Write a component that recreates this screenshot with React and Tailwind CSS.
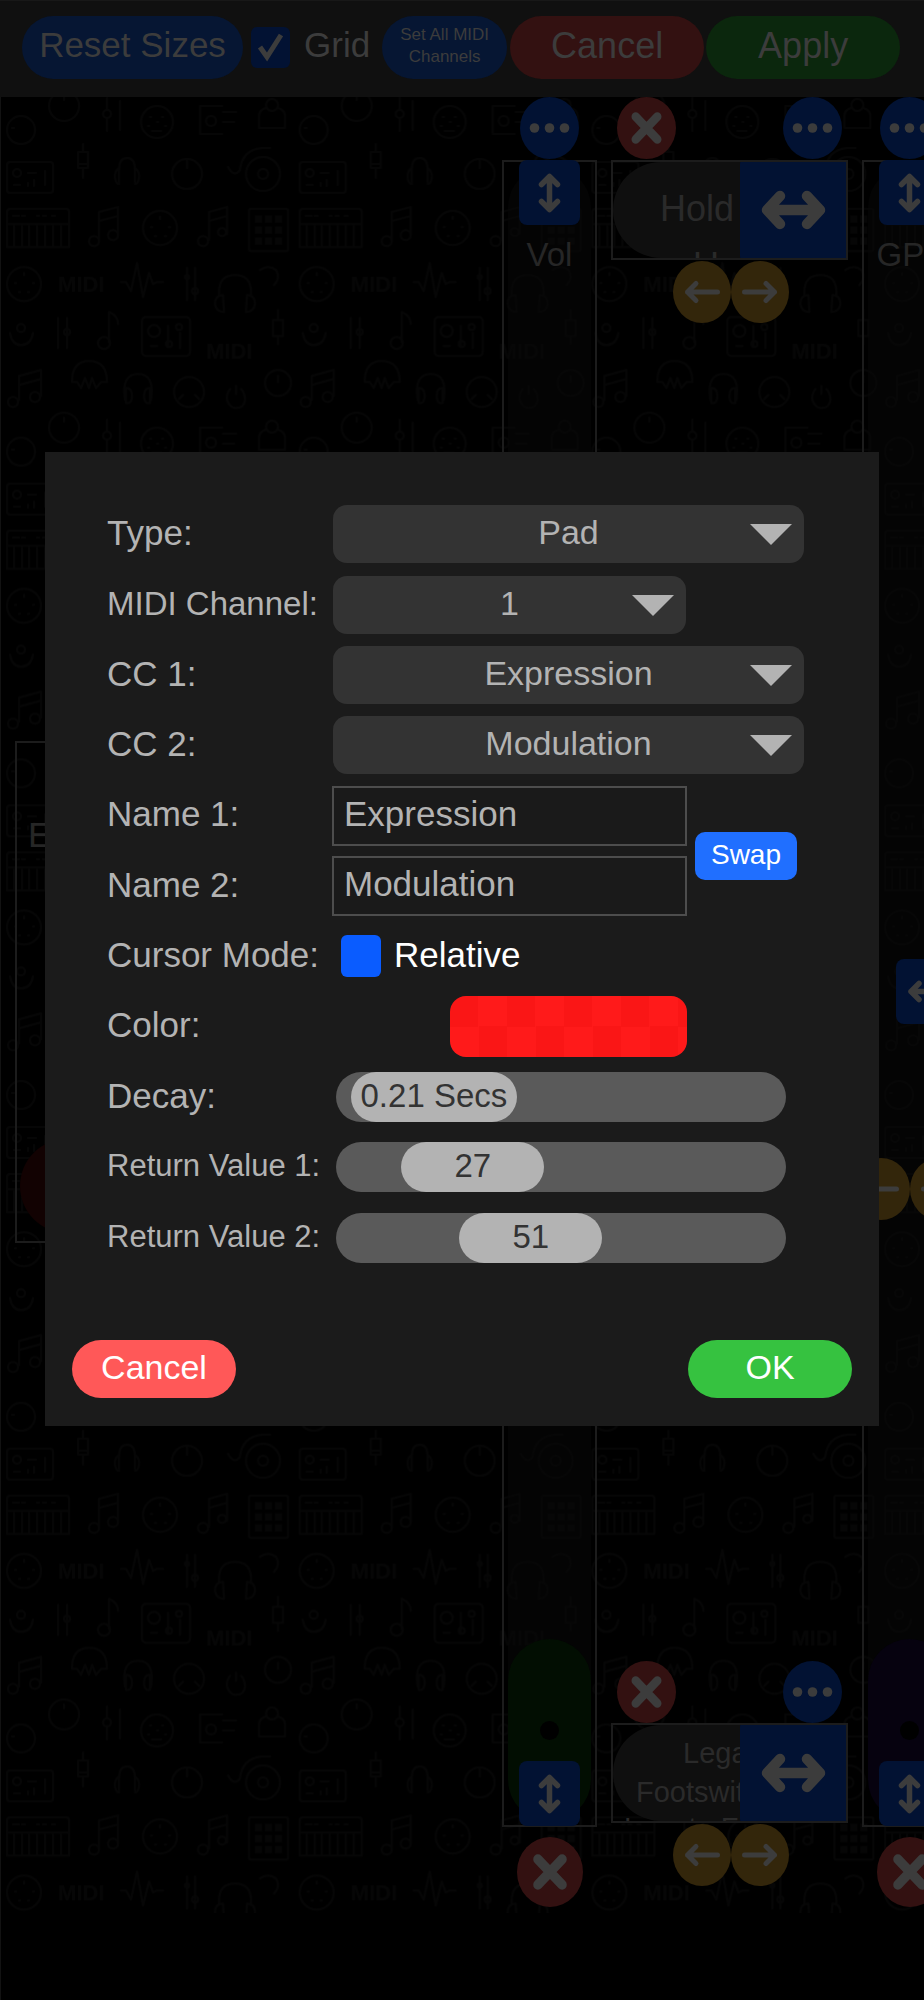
import { useState } from 'react';

/* ---------- Icons ---------- */

const CloseIcon = () => (
  <svg viewBox="0 0 60 60" preserveAspectRatio="none" className="w-full h-full" fill="none" stroke="currentColor" strokeWidth="8.5" strokeLinecap="round">
    <path d="M19 19L41 41M41 19L19 41" />
  </svg>
);

const DotsIcon = () => (
  <svg viewBox="0 0 59 62" className="w-full h-full" fill="currentColor">
    <circle cx="14.5" cy="31" r="4.8" />
    <circle cx="29.5" cy="31" r="4.8" />
    <circle cx="44.5" cy="31" r="4.8" />
  </svg>
);

const UpDownIcon = () => (
  <svg viewBox="0 0 61 65" className="w-full h-full" fill="none" stroke="currentColor" strokeWidth="5.5" strokeLinecap="round" strokeLinejoin="round">
    <path d="M30.5 17V49M22.5 24.5L30.5 16.5L38.5 24.5M22.5 41.5L30.5 49.5L38.5 41.5" />
  </svg>
);

const WideArrowIcon = () => (
  <svg viewBox="0 0 108 100" className="w-full h-full" fill="none" stroke="currentColor" strokeWidth="10.5" strokeLinecap="round" strokeLinejoin="round">
    <path d="M28 50H80M40 36L27 50L40 64M67 36L80 50L67 64" />
  </svg>
);

const SmallWideArrowIcon = () => (
  <svg viewBox="0 0 65 65" className="w-full h-full" fill="none" stroke="currentColor" strokeWidth="5.5" strokeLinecap="round" strokeLinejoin="round">
    <path d="M15 32.5H50M23 24.5L15 32.5L23 40.5M42 24.5L50 32.5L42 40.5" />
  </svg>
);

const ArrowLeftIcon = () => (
  <svg viewBox="0 0 58 62" className="w-full h-full" fill="none" stroke="currentColor" strokeWidth="5" strokeLinecap="round" strokeLinejoin="round">
    <path d="M14.5 31H44.5M23 22.5L14.5 31L23 39.5" />
  </svg>
);

const ArrowRightIcon = () => (
  <svg viewBox="0 0 58 62" className="w-full h-full" fill="none" stroke="currentColor" strokeWidth="5" strokeLinecap="round" strokeLinejoin="round">
    <path d="M13.5 31H43.5M35 22.5L43.5 31L35 39.5" />
  </svg>
);

/* ---------- Wallpaper ---------- */

const Wallpaper = () => (
  <svg className="absolute inset-0 w-full h-full" aria-hidden="true">
    <defs>
      <pattern id="doodles" x="0" y="-9" width="292.7" height="321.7" patternUnits="userSpaceOnUse">
        <g fill="none" stroke="#060606" strokeWidth="2" strokeLinecap="round" strokeLinejoin="round">
          {/* knobs, faders and face */}
          <circle cx="64" cy="18" r="15" />
          <path d="M64 8V12M107 10V22M107 31V43M120 13V42" />
          <circle cx="107" cy="26" r="4" />
          <circle cx="21" cy="42" r="14" />
          <path d="M12 40h2" />
          <circle cx="157" cy="34" r="16" />
          <path d="M150 29h1M162 29h1M157 34h1M148 38h1M165 38h1M152 43h9" />
          <path d="M222 18H200V46H222M223 24H236M223 34H234" />
          <circle cx="211" cy="33" r="5" />
          <path d="M266 20Q259 22 259 28V40H285V28Q285 22 278 20" />
          <circle cx="272" cy="17" r="6" />

          {/* drum machine, jack, headphones, turntable */}
          <rect x="7" y="74" width="46" height="31" rx="3" />
          <circle cx="17" cy="85" r="4" />
          <path d="M28 85h8M14 97h6M28 95v3M34 92v6M45 83V97" />
          <path d="M83 56V64M78 64h10V80h-10ZM78 76h10M83 80V90" />
          <path d="M119 94V82Q119 70 127 70Q135 70 135 82V94M119 80Q114 84 115 90Q116 96 119 96M135 80Q140 84 139 90Q138 96 135 96" />
          <circle cx="187" cy="86" r="15" />
          <path d="M187 72V80" />
          <circle cx="263" cy="86" r="17" />
          <circle cx="263" cy="86" r="5" />
          <path d="M228 79Q234 90 240 82Q242 62 262 60H270" />

          {/* keyboard, notes, DIN socket, pads */}
          <path d="M7 159V124Q7 121 10 121H66Q69 121 69 124V159ZM7 136H69M14 138V158M22 138V158M29 138V158M37 138V158M45 138V158M53 138V158M61 138V158M13 128h6M22 128h3M37 128h2M43 128h3M52 128h3" />
          <path d="M99 152V124L118 119V146M99 133L118 128" />
          <circle cx="94" cy="153" r="5" />
          <circle cx="113" cy="147" r="5" />
          <circle cx="160" cy="140" r="17" />
          <path d="M160 129v2M151 139h1M169 139h1M155 148h1M165 148h1" />
          <path d="M209 152V124L227 119V146M209 133L227 128" />
          <circle cx="203" cy="153" r="5" />
          <circle cx="222" cy="144" r="4" />
          <rect x="249" y="121" width="39" height="42" rx="2" />
          <path strokeWidth="7" strokeLinecap="butt" d="M255 131h7M265 131h7M275 131h7M255 142h7M265 142h7M275 142h7M255 153h7M265 153h7M275 153h7" />

          {/* DIN socket, wave, faders, headphones */}
          <circle cx="24" cy="196" r="17" />
          <path d="M24 185v2M15 195h1M33 195h1M19 204h1M28 204h1" />
          <path d="M121 194H126L131 203L137 175L143 209L149 185L153 196L157 194H163" />
          <path d="M187 180V212M195 180V212" />
          <circle cx="187" cy="189" r="2" />
          <circle cx="195" cy="203" r="3" />
          <path d="M219 208V204Q219 187 235 187Q251 187 251 204V208" />
          <path d="M223 207Q215 207 215 216Q216 224 224 224ZM247 207Q255 207 255 216Q254 224 246 224Z" />
          <path d="M260 182Q268 176 276 182Q281 190 274 197" />

          {/* face, faders, note, mixer, jack */}
          <circle cx="21" cy="240" r="4" />
          <path d="M10 245Q12 257 21 257Q31 257 33 245M58 230V260M67 230V260" />
          <circle cx="67" cy="244" r="3" />
          <path d="M109 254V224Q118 228 118 236" />
          <circle cx="104" cy="255" r="6" />
          <rect x="142" y="229" width="48" height="39" rx="4" />
          <circle cx="154" cy="243" r="6" />
          <path d="M168 238V258M180 245V260M151 258h6" />
          <circle cx="179" cy="239" r="3" />
          <circle cx="169" cy="256" r="3" />
          <path d="M278 222V232M273 232h10V248h-10ZM278 248V256" />

          {/* notes, sun, headphones, knobs */}
          <path d="M19 312V288L41 282V308M19 297L41 291" />
          <circle cx="13" cy="314" r="5" />
          <circle cx="35" cy="309" r="5" />
          <path d="M72 294Q72 273 89 273Q107 273 107 294H101L96 300L92 290L89 300L85 290L81 300L77 294Z" />
          <path d="M125 312Q121 286 138 286Q155 286 151 312" />
          <path d="M126 300Q132 300 132 308Q132 316 126 315ZM150 300Q144 300 144 308Q144 316 150 315Z" />
          <circle cx="189" cy="304" r="15" />
          <path d="M179 311l4 -4M199 311l-4 -4" />
          <path d="M236 298V306M230 301Q226 306 227 312Q230 320 236 320Q244 320 245 312Q245 305 241 301" />
          <circle cx="278" cy="295" r="13" />
          <path d="M278 288V294" />
        </g>
        <g fill="#060606" fontFamily="Liberation Sans, sans-serif" fontWeight="bold" fontSize="22">
          <text x="58" y="204">MIDI</text>
          <text x="206" y="271">MIDI</text>
        </g>
      </pattern>
    </defs>
    <rect width="100%" height="100%" fill="url(#doodles)" />
  </svg>
);

/* ---------- Canvas widgets ---------- */

const DotsButton = ({ className }) => (
  <button aria-label="Options" className={`absolute w-[59px] h-[62px] rounded-[50%] bg-[#021233] text-[#3c3c3c] ${className}`}>
    <DotsIcon />
  </button>
);

const CloseButton = ({ className }) => (
  <button aria-label="Remove" className={`absolute rounded-[50%] bg-[#331111] text-[#3c3c3c] ${className}`}>
    <CloseIcon />
  </button>
);

const StretchButton = ({ className }) => (
  <button aria-label="Resize height" className={`absolute w-[61px] h-[65px] rounded-lg bg-[#021233] text-[#3c3c3c] ${className}`}>
    <UpDownIcon />
  </button>
);

const MoveButtons = ({ className }) => (
  <div className={`absolute flex text-[#3c3c3c] ${className}`}>
    <button aria-label="Move left" className="w-[58px] h-[62px] rounded-[50%] bg-[#33260b]">
      <ArrowLeftIcon />
    </button>
    <button aria-label="Move right" className="w-[58px] h-[62px] rounded-[50%] bg-[#33260b]">
      <ArrowRightIcon />
    </button>
  </div>
);

const Strip = ({ name, className, knobClass }) => (
  <div className={`absolute top-[63px] w-[95px] h-[1667px] border-2 border-[#1c1c1c] ${className}`}>
    <div className="absolute inset-x-1 top-1 bottom-1 rounded-full bg-[#080808]/50" />
    <div className={`absolute inset-x-1 bottom-1 h-[182px] rounded-full flex items-center justify-center ${knobClass}`}>
      <span className="w-[19px] h-[19px] rounded-full bg-black" />
    </div>
    <StretchButton className="left-[15px] -top-[2px]" />
    <StretchButton className="left-[15px] -bottom-[1px]" />
    <p className="absolute inset-x-0 top-[73px] text-center text-[33px] leading-[40px] text-[#262626]">{name}</p>
  </div>
);

const SwitchBox = ({ className, children }) => (
  <div className={`absolute left-[611px] w-[237px] h-[100px] border-2 border-[#1c1c1c] overflow-hidden ${className}`}>
    <div className="absolute inset-0 rounded-l-full bg-[#0f0f0f] text-[#2a2a2a]">{children}</div>
    <button aria-label="Resize width" className="absolute -right-[2px] -top-[2px] w-[108px] h-[100px] rounded bg-[#021233] text-[#3c3c3c]">
      <WideArrowIcon />
    </button>
  </div>
);

const Canvas = () => (
  <main className="relative h-[1816px] overflow-hidden">
    <Wallpaper />

    <Strip name="Vol" className="left-[502px]" knobClass="bg-[#020e02]" />
    <DotsButton className="left-[520px] top-0" />
    <CloseButton className="left-[517px] top-[1740px] w-[66px] h-[70px]" />

    <SwitchBox className="top-[63px]">
      <p className="absolute left-[47px] top-[27px] text-[36px] leading-[40px]">Hold</p>
      <p className="absolute left-[80px] top-[84px] text-[36px] leading-[40px]">Un</p>
    </SwitchBox>
    <CloseButton className="left-[617px] top-0 w-[59px] h-[62px]" />
    <DotsButton className="left-[783px] top-0" />
    <MoveButtons className="left-[673px] top-[164px]" />

    <SwitchBox className="top-[1626px]">
      <p className="absolute left-[70px] top-[9px] text-[29px] leading-[39px]">Legato</p>
      <p className="absolute left-[23px] top-[48px] text-[29px] leading-[39px]">Footswitch</p>
      <p className="absolute left-[11px] top-[84px] text-[29px] leading-[39px]">Legato Foot</p>
    </SwitchBox>
    <CloseButton className="left-[617px] top-[1564px] w-[59px] h-[62px]" />
    <DotsButton className="left-[783px] top-[1564px]" />
    <MoveButtons className="left-[673px] top-[1727px]" />

    <Strip name="GP1" className="left-[862px]" knobClass="bg-[#06020f]" />
    <DotsButton className="left-[880px] top-0" />
    <CloseButton className="left-[877px] top-[1740px] w-[66px] h-[70px]" />

    <button aria-label="Resize width" className="absolute left-[896px] top-[862px] w-[65px] h-[65px] rounded-lg bg-[#021233] text-[#3c3c3c]">
      <SmallWideArrowIcon />
    </button>
    <MoveButtons className="left-[852px] top-[1061px]" />

    <div className="absolute left-[15px] top-[644px] w-[480px] h-[502px] border-2 border-[#1c1c1c]">
      <p className="absolute left-[11px] top-[72px] text-[35px] leading-[40px] text-[#262626]">E</p>
      <div className="absolute left-[3px] bottom-[8px] w-[94px] h-[94px] rounded-full bg-[#120202]" />
    </div>
  </main>
);

/* ---------- Top bar ---------- */

const TopBar = () => (
  <header className="flex items-start h-[97px] pt-[15px] pl-[22px] bg-[#101010] border-t border-[#181818] text-[36px] text-[#3c3c3c]">
    <button className="w-[221px] h-[63px] pb-1 rounded-full bg-[#061633] text-[35px]">Reset Sizes</button>
    <label className="flex items-center h-[63px] ml-2 mr-3">
      <span className="relative w-[39px] h-[41px] mr-[14px]">
        <input type="checkbox" defaultChecked className="appearance-none block w-full h-full rounded-md bg-[#021233]" />
        <svg viewBox="0 0 39 41" className="absolute inset-0 pointer-events-none" fill="none" stroke="currentColor" strokeWidth="5">
          <path d="M9 20L16 30L30 8" />
        </svg>
      </span>
      <span className="pb-1 text-[35px]">Grid</span>
    </label>
    <button className="w-[125px] h-[63px] pb-1 rounded-full bg-[#061633] text-[17px] leading-[22px]">
      Set All MIDI<br />Channels
    </button>
    <button className="w-[194px] h-[63px] pb-1 ml-[3px] rounded-full bg-[#331111]">Cancel</button>
    <button className="w-[194px] h-[63px] pb-1 ml-[2px] rounded-full bg-[#0b270d]">Apply</button>
  </header>
);

/* ---------- Dialog ---------- */

const Row = ({ label, htmlFor, labelClass = 'text-[35px]', children }) => (
  <div className="flex items-center">
    <label htmlFor={htmlFor} className={`w-[226px] pb-[2px] shrink-0 whitespace-nowrap ${labelClass}`}>{label}</label>
    {children}
  </div>
);

const Dropdown = ({ id, options, className = 'w-[471px]' }) => (
  <div className={`relative h-[58px] ${className}`}>
    <select
      id={id}
      className="appearance-none w-full h-full pb-[3px] rounded-[14px] bg-[#333333] text-[34px] text-center [text-align-last:center]"
    >
      {options.map((option) => (
        <option key={option}>{option}</option>
      ))}
    </select>
    <svg viewBox="0 0 42 21" className="absolute right-3 top-[19px] w-[42px] h-[21px] pointer-events-none" fill="#b3b3b3">
      <path d="M0 0H42L21 21Z" />
    </svg>
  </div>
);

const ValueSlider = ({ id, max, step = 1, initial, format = String, wide = false }) => {
  const [value, setValue] = useState(initial);
  const fraction = value / max;
  const thumb = wide ? 166 : 143;

  return (
    <div className="relative w-[450px] h-[50px] ml-[3px]">
      <input
        id={id}
        type="range"
        min="0"
        max={max}
        step={step}
        value={value}
        onChange={(e) => setValue(Number(e.target.value))}
        className={`appearance-none block w-full h-full rounded-full bg-[#5a5a5a] [&::-webkit-slider-thumb]:appearance-none [&::-webkit-slider-thumb]:h-[50px] [&::-webkit-slider-thumb]:rounded-full [&::-webkit-slider-thumb]:bg-[#b3b3b3] ${
          wide ? '[&::-webkit-slider-thumb]:w-[166px]' : '[&::-webkit-slider-thumb]:w-[143px]'
        }`}
      />
      <output
        htmlFor={id}
        className={`absolute top-0 text-center text-[33px] leading-[48px] text-[#333333] pointer-events-none ${wide ? 'w-[166px]' : 'w-[143px]'}`}
        style={{ left: (450 - thumb) * fraction }}
      >
        {format(value)}
      </output>
    </div>
  );
};

const PadDialog = () => {
  const [names, setNames] = useState(['Expression', 'Modulation']);
  const inputClass = 'w-[355px] h-[60px] -ml-px px-[10px] pb-[3px] border-2 border-[#4d4d4d] bg-[#1a1a1a] text-[35px]';

  return (
    <div className="absolute inset-x-0 top-[452px] px-[45px]">
      <section role="dialog" aria-label="Pad settings" className="bg-[#1b1b1b] text-[#b3b3b3] pt-[47px] pb-7">
        <div className="relative grid auto-rows-fr h-[774px] pl-[62px]">
          <Row label="Type:" htmlFor="type">
            <Dropdown id="type" options={['Pad', 'Slider', 'Button']} />
          </Row>
          <Row label="MIDI Channel:" htmlFor="channel" labelClass="text-[33px]">
            <Dropdown id="channel" options={['1', '2', '3', '4']} className="w-[353px]" />
          </Row>
          <Row label="CC 1:" htmlFor="cc1">
            <Dropdown id="cc1" options={['Expression', 'Modulation']} />
          </Row>
          <Row label="CC 2:" htmlFor="cc2">
            <Dropdown id="cc2" options={['Modulation', 'Expression']} />
          </Row>
          <Row label="Name 1:" htmlFor="name1">
            <input id="name1" className={inputClass} value={names[0]} onChange={(e) => setNames([e.target.value, names[1]])} />
          </Row>
          <Row label="Name 2:" htmlFor="name2">
            <input id="name2" className={inputClass} value={names[1]} onChange={(e) => setNames([names[0], e.target.value])} />
          </Row>
          <Row label="Cursor Mode:" htmlFor="relative">
            <input id="relative" type="checkbox" className="appearance-none w-10 h-[42px] ml-2 rounded-md bg-[#0a5cff]" />
            <label htmlFor="relative" className="ml-[13px] pb-[2px] text-[35px] text-white">Relative</label>
          </Row>
          <Row label="Color:" htmlFor="color">
            <button
              id="color"
              aria-label="Pick color"
              className="w-[237px] h-[61px] ml-[117px] rounded-2xl bg-[repeating-conic-gradient(#ff1a1a_0_25%,#fa1616_0_50%)] bg-[length:57px_61px]"
            />
          </Row>
          <Row label="Decay:" htmlFor="decay">
            <ValueSlider id="decay" max={4} step={0.01} initial={0.21} format={(v) => `${v.toFixed(2)} Secs`} wide />
          </Row>
          <Row label="Return Value 1:" htmlFor="return1" labelClass="text-[31px]">
            <ValueSlider id="return1" max={127} initial={27} />
          </Row>
          <Row label="Return Value 2:" htmlFor="return2" labelClass="text-[31px]">
            <ValueSlider id="return2" max={127} initial={51} />
          </Row>
          {/* Swap sits between the two name rows */}
          <button
            onClick={() => setNames([names[1], names[0]])}
            className="absolute left-[650px] top-[333px] w-[102px] h-12 pb-[2px] rounded-[10px] bg-[#206fff] text-[28px] leading-[44px] text-white"
          >
            Swap
          </button>
        </div>

        <div className="flex justify-between mt-[67px] px-[27px] text-[34px] text-white">
          <button className="w-[164px] h-[58px] pb-1 rounded-full bg-[#ff5858]">Cancel</button>
          <button className="w-[164px] h-[58px] pb-1 rounded-full bg-[#36c240]">OK</button>
        </div>
      </section>
    </div>
  );
};

export default function App() {
  return (
    <div className="relative min-h-screen overflow-hidden bg-black shadow-[inset_1px_0_#121212] font-['Liberation_Sans',Arial,sans-serif]">
      <TopBar />
      <Canvas />
      <PadDialog />
    </div>
  );
}
